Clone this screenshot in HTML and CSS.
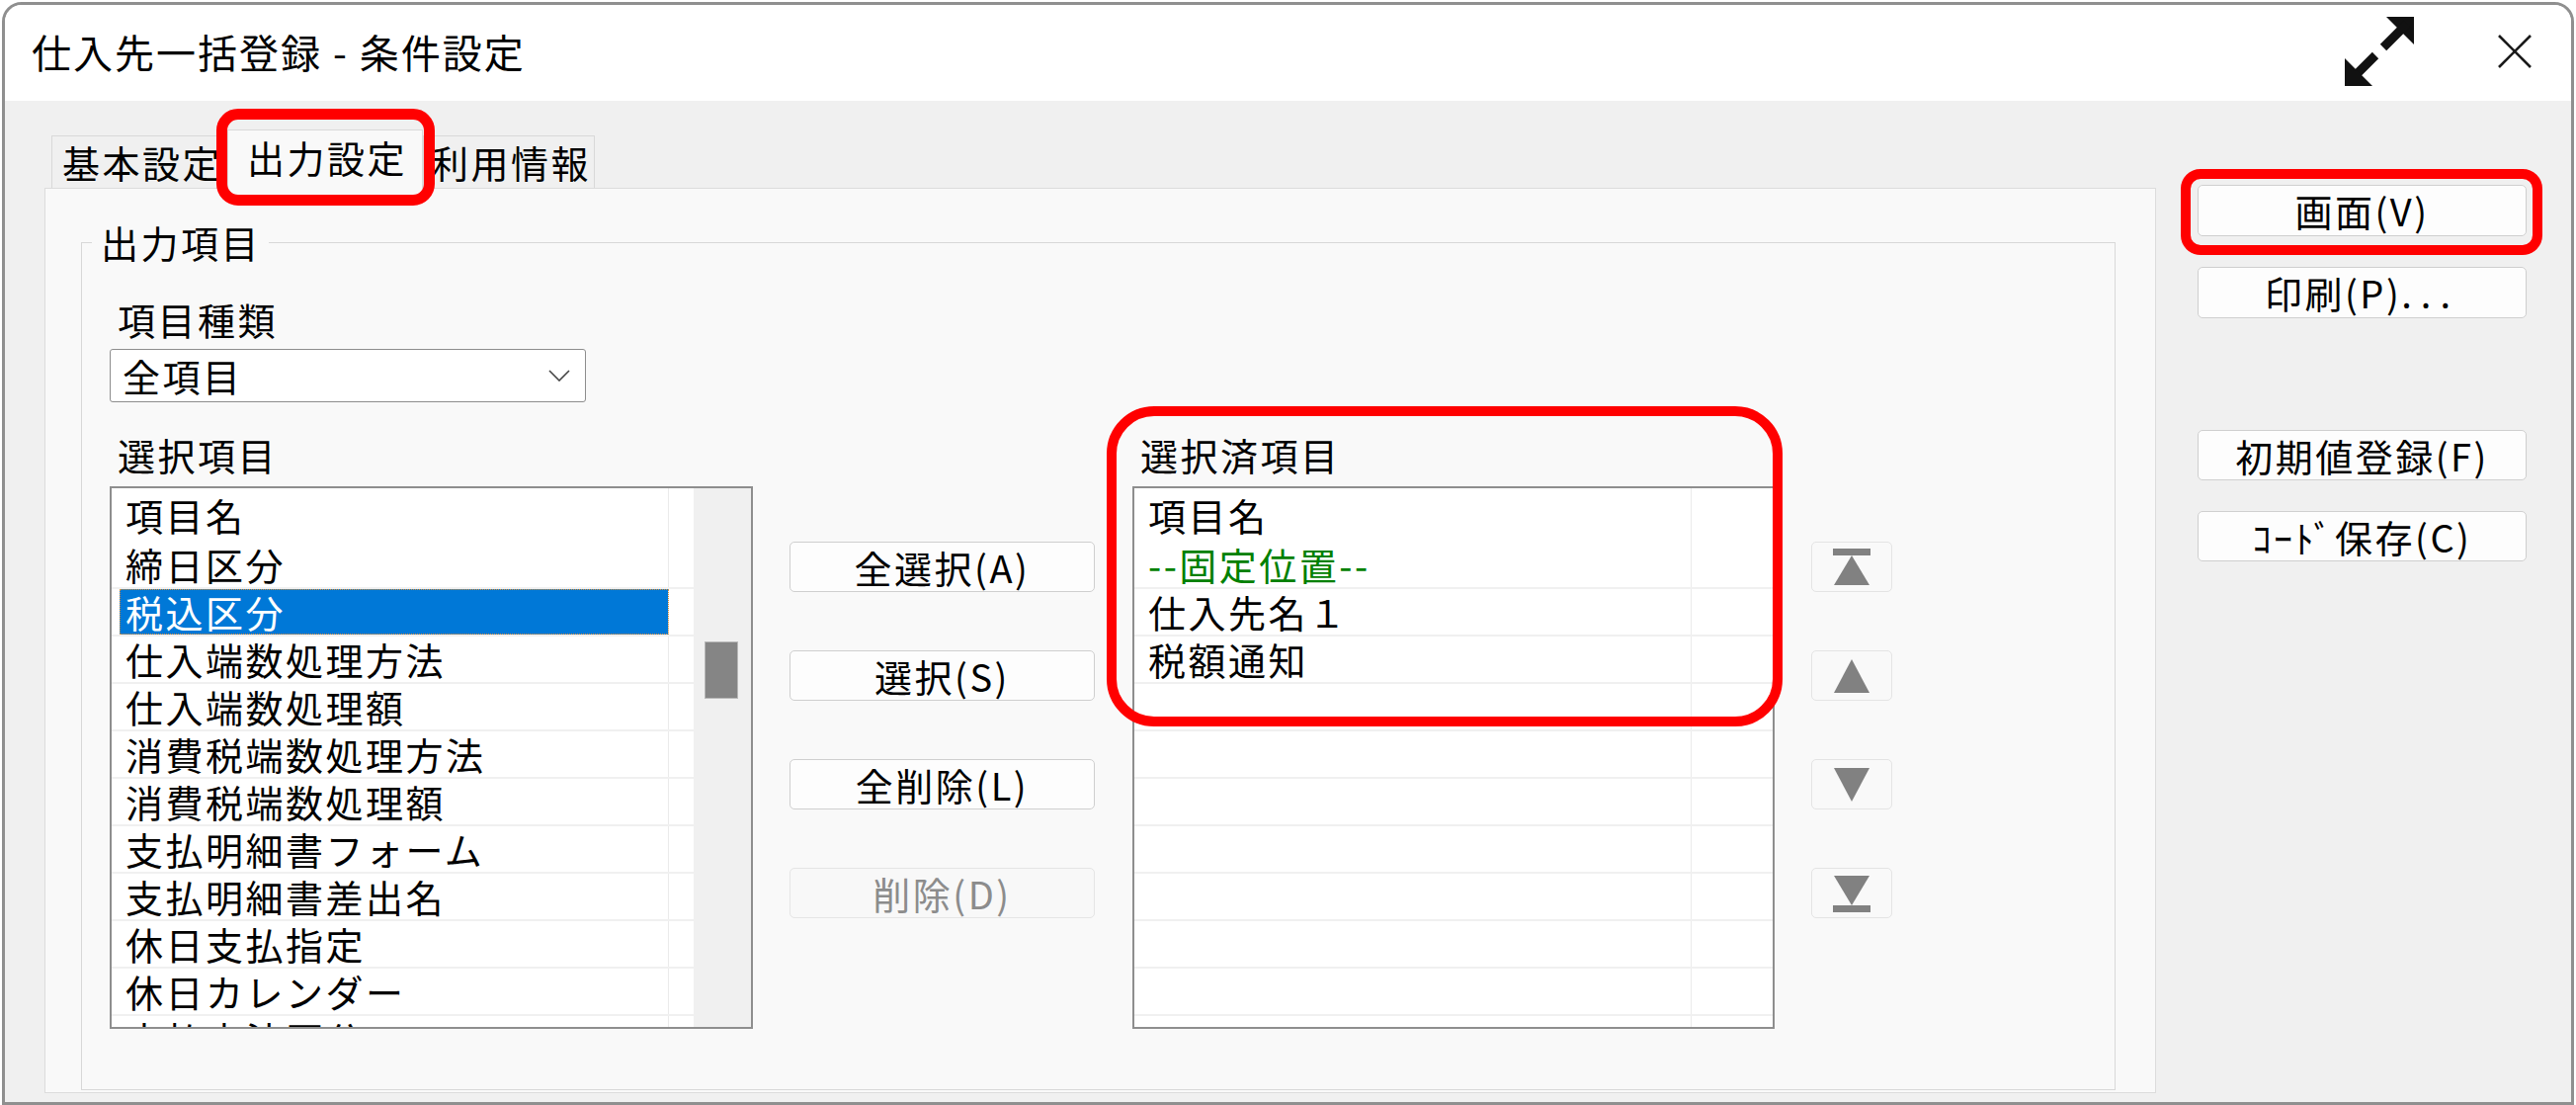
FILE: index.html
```html
<!DOCTYPE html>
<html lang="ja">
<head>
    <meta charset="UTF-8">
    <meta name="viewport" content="width=device-width, initial-scale=1.0">
    <title>仕入先一括登録 - 条件設定</title>
    <link rel="stylesheet" href="styles.css">
</head>
<body>
    <div class="window">
        <div class="titlebar">
            <div class="title">仕入先一括登録 - 条件設定</div>
            <!-- maximize / restore -->
            <svg class="expand-icon" viewBox="0 0 70 70" width="70" height="70">
                <polygon points="42,0 70,0 70,28" fill="#111"/>
                <line x1="63" y1="7" x2="39" y2="31" stroke="#111" stroke-width="9"/>
                <line x1="31" y1="39" x2="7" y2="63" stroke="#111" stroke-width="9"/>
                <polygon points="0,42 0,70 28,70" fill="#111"/>
            </svg>
            <svg class="close-icon" viewBox="0 0 34 34" width="34" height="34">
                <line x1="1" y1="1" x2="33" y2="33" stroke="#1a1a1a" stroke-width="2.6"/>
                <line x1="33" y1="1" x2="1" y2="33" stroke="#1a1a1a" stroke-width="2.6"/>
            </svg>
        </div>

        <div class="client">
            <div class="tab-area">
                <div class="tabs">
                    <div class="tab first">基本設定</div>
                    <div class="tab active">出力設定<span class="ring ring-tab"></span></div>
                    <div class="tab last">利用情報</div>
                </div>

                <div class="tab-panel">
                    <fieldset class="group">
                        <legend>出力項目</legend>
                        <div class="group-body">
                            <div class="field-label">項目種類</div>
                            <div class="select">
                                <span>全項目</span>
                                <svg viewBox="0 0 22 12" width="22" height="12">
                                    <polyline points="1,1 11,11 21,1" fill="none" stroke="#444" stroke-width="1.6"/>
                                </svg>
                            </div>

                            <div class="lists">
                                <!-- available items -->
                                <div class="list-col">
                                    <div class="field-label list-label">選択項目</div>
                                    <div class="listbox">
                                        <div class="rows">
                                            <div class="row head"><div class="cell">項目名</div><div class="cell2"></div></div>
                                            <div class="row"><div class="cell">締日区分</div><div class="cell2"></div></div>
                                            <div class="row selected"><div class="cell">税込区分</div><div class="cell2"></div></div>
                                            <div class="row"><div class="cell">仕入端数処理方法</div><div class="cell2"></div></div>
                                            <div class="row"><div class="cell">仕入端数処理額</div><div class="cell2"></div></div>
                                            <div class="row"><div class="cell">消費税端数処理方法</div><div class="cell2"></div></div>
                                            <div class="row"><div class="cell">消費税端数処理額</div><div class="cell2"></div></div>
                                            <div class="row"><div class="cell">支払明細書フォーム</div><div class="cell2"></div></div>
                                            <div class="row"><div class="cell">支払明細書差出名</div><div class="cell2"></div></div>
                                            <div class="row"><div class="cell">休日支払指定</div><div class="cell2"></div></div>
                                            <div class="row"><div class="cell">休日カレンダー</div><div class="cell2"></div></div>
                                            <div class="row"><div class="cell">支払方法区分</div><div class="cell2"></div></div>
                                        </div>
                                        <div class="scrollbar"><div class="thumb"></div></div>
                                    </div>
                                </div>

                                <div class="move-col">
                                    <button class="btn">全選択(A)</button>
                                    <button class="btn">選択(S)</button>
                                    <button class="btn">全削除(L)</button>
                                    <button class="btn" disabled>削除(D)</button>
                                </div>

                                <!-- chosen items -->
                                <div class="list-col picked">
                                    <div class="field-label list-label">選択済項目</div>
                                    <div class="listbox">
                                        <div class="rows">
                                            <div class="row head"><div class="cell">項目名</div><div class="cell2"></div></div>
                                            <div class="row fixed"><div class="cell">--固定位置--</div><div class="cell2"></div></div>
                                            <div class="row"><div class="cell">仕入先名１</div><div class="cell2"></div></div>
                                            <div class="row"><div class="cell">税額通知</div><div class="cell2"></div></div>
                                            <div class="row"><div class="cell"></div><div class="cell2"></div></div>
                                            <div class="row"><div class="cell"></div><div class="cell2"></div></div>
                                            <div class="row"><div class="cell"></div><div class="cell2"></div></div>
                                            <div class="row"><div class="cell"></div><div class="cell2"></div></div>
                                            <div class="row"><div class="cell"></div><div class="cell2"></div></div>
                                            <div class="row"><div class="cell"></div><div class="cell2"></div></div>
                                            <div class="row"><div class="cell"></div><div class="cell2"></div></div>
                                            <div class="row"><div class="cell"></div><div class="cell2"></div></div>
                                        </div>
                                    </div>
                                    <span class="ring ring-list"></span>
                                </div>

                                <div class="order-col">
                                    <button class="icon-btn">
                                        <svg viewBox="0 0 38 38" width="38" height="38"><rect x="0" y="0" width="38" height="7"/><polygon points="19,7 1,37 37,37"/></svg>
                                    </button>
                                    <button class="icon-btn">
                                        <svg viewBox="0 0 38 38" width="38" height="38"><polygon points="19,2 1,36 37,36"/></svg>
                                    </button>
                                    <button class="icon-btn">
                                        <svg viewBox="0 0 38 38" width="38" height="38"><polygon points="1,2 37,2 19,36"/></svg>
                                    </button>
                                    <button class="icon-btn">
                                        <svg viewBox="0 0 38 38" width="38" height="38"><polygon points="1,1 37,1 19,31"/><rect x="0" y="31" width="38" height="7"/></svg>
                                    </button>
                                </div>
                            </div>
                        </div>
                    </fieldset>
                </div>
            </div>

            <div class="side-col">
                <div class="view-wrap">
                    <button class="btn side-btn">画面(V)</button>
                    <span class="ring ring-view"></span>
                </div>
                <button class="btn side-btn print">印刷(P)<span class="dots">...</span></button>
                <button class="btn side-btn initial">初期値登録(F)</button>
                <button class="btn side-btn code">ｺｰﾄﾞ保存(C)</button>
            </div>
        </div>
    </div>
</body>
</html>
```

FILE: styles.css
```css
body {
    margin: 0;
    background-color: #fff;
    font-family: "Noto Sans CJK JP", sans-serif;
    font-size: 38px;
    line-height: 46px;
    letter-spacing: 2.5px;
    color: #000;
    overflow: hidden;
}

.window {
    box-sizing: border-box;
    width: 2603px;
    height: 1116px;
    margin: 2px 0 0 2px;
    border: 3px solid #8f8f8f;
    border-radius: 20px 20px 0 0;
    background-color: #f0f0f0;
    display: flex;
    flex-direction: column;
    overflow: hidden;
}

/* Title bar */
.titlebar {
    height: 97px;
    flex-shrink: 0;
    background-color: #fff;
    display: flex;
    align-items: center;
    padding: 0 40px 3px 27px;
    box-sizing: border-box;
}

.title {
    font-size: 40px;
    letter-spacing: 2px;
    line-height: 48px;
}

.expand-icon {
    margin-left: auto;
    margin-right: 85px;
}

/* Window content */
.client {
    flex: 1;
    display: flex;
}

.tab-area {
    width: 2137px;
    margin-left: 40px;
    padding: 29px 0 9px;
    box-sizing: border-box;
    display: flex;
    flex-direction: column;
}

.tabs {
    display: flex;
    align-items: flex-end;
    margin-left: 7px;
}

.tab {
    box-sizing: border-box;
    height: 53px;
    border: 1px solid #d9d9d9;
    border-bottom: none;
    background-color: #f0f0f0;
    display: flex;
    align-items: center;
    white-space: nowrap;
}

.tab.first {
    width: 178px;
    padding-left: 10px;
}

.tab.active {
    width: 198px;
    height: 60px;
    padding: 0 0 6px 19px;
    background-color: #f9f9f9;
    margin-bottom: -1px;
    position: relative;
    z-index: 1;
}

.tab.last {
    width: 174px;
    padding-left: 7px;
}

.tab-panel {
    flex: 1;
    background-color: #f9f9f9;
    border: 1px solid #dcdcdc;
    display: flex;
    flex-direction: column;
    padding: 31px 40px 2px 36px;
}

/* Group box */
.group {
    flex: 1;
    margin: 0;
    padding: 0;
    border: 1px solid #d8d8d8;
    min-width: 0;
}

.group legend {
    margin-left: 10px;
    padding: 0 8px 0 9px;
}

.group-body {
    padding: 32px 0 0 28px;
}

.field-label {
    padding-left: 8px;
}

.select {
    box-sizing: border-box;
    width: 482px;
    height: 54px;
    margin-top: 7px;
    border: 1px solid #8d8d8d;
    border-radius: 3px;
    background-color: #fff;
    display: flex;
    align-items: center;
    justify-content: space-between;
    padding: 0 15px 0 12px;
}

.lists {
    display: flex;
    align-items: flex-start;
    margin-top: 30px;
}

.list-col {
    width: 651px;
}

.list-col.picked {
    width: 650px;
    margin-left: 38px;
    position: relative;
}

.list-label {
    margin-bottom: 9px;
}

/* List boxes */
.listbox {
    box-sizing: border-box;
    height: 549px;
    border: 2px solid #8e8e8e;
    background-color: #fff;
    display: flex;
    overflow: hidden;
}

.rows {
    flex: 1;
}

.row {
    box-sizing: border-box;
    height: 48px;
    border-bottom: 2px solid #f0f0f0;
    display: flex;
}

.row.head {
    height: 54px;
    border-bottom: none;
}

.cell {
    box-sizing: border-box;
    width: 556px;
    margin-left: 8px;
    padding-left: 6px;
    border-right: 1px solid #ebebeb;
    display: flex;
    align-items: center;
    line-height: 44px;
    white-space: nowrap;
}

.cell2 {
    flex: 1;
}

.row.selected .cell {
    background-color: #0078d7;
    color: #fff;
    outline: 1px dotted #d9903a;
    outline-offset: -1px;
}

.row.fixed .cell {
    color: #008000;
}

.scrollbar {
    width: 58px;
    background-color: #f0f0f0;
}

.thumb {
    box-sizing: border-box;
    width: 34px;
    height: 58px;
    margin: 155px 0 0 11px;
    background-color: #858585;
    border: 1px solid #b8b8b8;
}

/* Buttons */
.btn {
    box-sizing: border-box;
    height: 51px;
    padding: 0;
    border: 1px solid #cfcfcf;
    border-radius: 5px;
    background-color: #fdfdfd;
    font-family: inherit;
    font-size: 38px;
    line-height: 44px;
    letter-spacing: inherit;
    color: #000;
    display: flex;
    align-items: center;
    justify-content: center;
    white-space: nowrap;
}

.btn:disabled {
    color: #8c8c8c;
    border-color: #e5e5e5;
    background-color: #f8f8f8;
}

.dots {
    letter-spacing: 9px;
}

.move-col {
    width: 309px;
    margin-left: 37px;
    padding-top: 111px;
    display: flex;
    flex-direction: column;
    gap: 59px;
}

.order-col {
    width: 82px;
    margin-left: 37px;
    padding-top: 111px;
    display: flex;
    flex-direction: column;
    gap: 59px;
}

.icon-btn {
    box-sizing: border-box;
    height: 51px;
    padding: 0;
    border: 1px solid #e4e4e4;
    border-radius: 5px;
    background-color: #f9f9f9;
    display: flex;
    align-items: center;
    justify-content: center;
}

.icon-btn svg {
    fill: #818181;
    filter: blur(0.6px);
}

/* Right-hand command buttons */
.side-col {
    width: 333px;
    margin-left: 42px;
    padding-top: 85px;
    display: flex;
    flex-direction: column;
}

.side-btn {
    width: 333px;
    height: 52px;
}

.view-wrap {
    position: relative;
}

.side-btn.print {
    margin-top: 31px;
}

.side-btn.initial {
    margin-top: 113px;
    height: 51px;
}

.side-btn.code {
    margin-top: 31px;
    height: 51px;
}

/* Red highlight rings */
.ring {
    position: absolute;
    box-sizing: border-box;
    border: 10px solid #ff0000;
    pointer-events: none;
}

.ring-tab {
    top: -22px;
    left: -12px;
    right: -13px;
    bottom: -17px;
    border-width: 11px;
    border-radius: 22px;
}

.ring-view {
    top: -16px;
    left: -17px;
    right: -16px;
    bottom: -19px;
    border-radius: 20px;
}

.ring-list {
    top: -26px;
    left: -26px;
    right: -8px;
    height: 324px;
    border-radius: 48px;
}
```
